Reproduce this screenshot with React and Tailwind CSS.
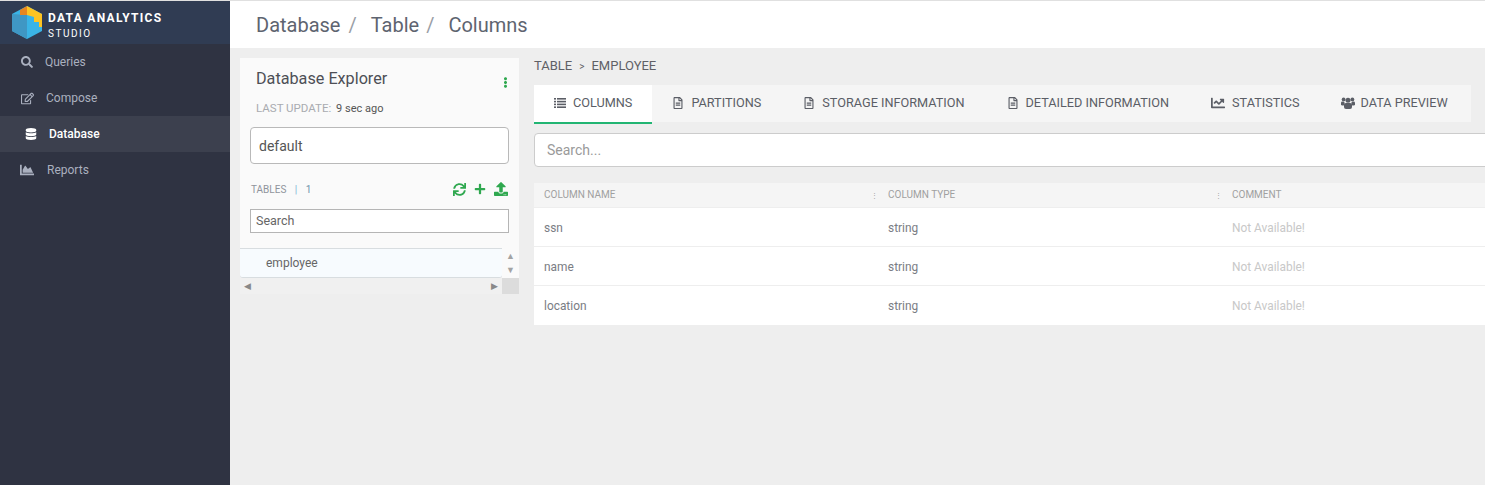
import { FaSearch, FaRegEdit, FaDatabase, FaChartArea, FaRegFileAlt, FaChartLine, FaSync, FaPlus, FaUpload, FaEllipsisV } from 'react-icons/fa'

function ListIcon() {
  return (
    <svg width="12" height="10" viewBox="0 0 12 10" fill="currentColor">
      <rect x="0" y="0" width="2" height="1.6" />
      <rect x="3" y="0" width="9" height="1.6" />
      <rect x="0" y="2.8" width="2" height="1.6" />
      <rect x="3" y="2.8" width="9" height="1.6" />
      <rect x="0" y="5.6" width="2" height="1.6" />
      <rect x="3" y="5.6" width="9" height="1.6" />
      <rect x="0" y="8.4" width="2" height="1.6" />
      <rect x="3" y="8.4" width="9" height="1.6" />
    </svg>
  )
}

function UsersIcon() {
  return (
    <svg width="14" height="12" viewBox="0 0 14 12" fill="currentColor" className="-mx-px">
      <circle cx="2.6" cy="2.4" r="1.9" />
      <circle cx="11.4" cy="2.4" r="1.9" />
      <circle cx="7" cy="3.2" r="2.5" />
      <rect x="0" y="4.6" width="3.6" height="4" rx="1.4" />
      <rect x="10.4" y="4.6" width="3.6" height="4" rx="1.4" />
      <rect x="3" y="6" width="8" height="6" rx="2" />
    </svg>
  )
}

const navItems = [
  { label: 'Queries', icon: FaSearch, size: 12, left: 'pl-5', gap: 'gap-[11px]' },
  { label: 'Compose', icon: FaRegEdit, size: 13, left: 'pl-5', gap: 'gap-3' },
  { label: 'Database', icon: FaDatabase, size: 12, left: 'pl-6', gap: 'gap-[11px]', active: true },
  { label: 'Reports', icon: FaChartArea, size: 14, left: 'pl-5', gap: 'gap-[13px]' },
]

const tabs = [
  { label: 'COLUMNS', icon: ListIcon, active: true },
  { label: 'PARTITIONS', icon: FaRegFileAlt, size: 12 },
  { label: 'STORAGE INFORMATION', icon: FaRegFileAlt, size: 12 },
  { label: 'DETAILED INFORMATION', icon: FaRegFileAlt, size: 12 },
  { label: 'STATISTICS', icon: FaChartLine, size: 14 },
  { label: 'DATA PREVIEW', icon: UsersIcon },
]

const rows = ['ssn', 'name', 'location']

function Logo() {
  return (
    <svg width="30" height="33" viewBox="0 0 30 33" className="shrink-0">
      <polygon points="15,0 30,8 30,25 15,33 0,25 0,8" fill="#3ab4e6" />
      <polygon points="15,9 15,33 0,25 0,8" fill="#3f97c4" />
      <polygon points="8,4 15,0 15,9 8,9" fill="#e8861f" />
      <polygon points="15,0 30,8 30,21 27,21 27,16 22,16 22,11 15,9" fill="#fdc422" />
    </svg>
  )
}

function Sidebar() {
  return (
    <aside className="w-[230px] shrink-0 bg-[#2f3342] flex flex-col">
      <div className="h-[43px] bg-[#303c53] flex items-center pl-3 gap-1.5">
        <Logo />
        <div className="text-white font-bold leading-[15px] tracking-[1.3px] mt-[6px]">
          <div className="text-[12px]">DATA ANALYTICS</div>
          <div className="text-[10px] font-normal tracking-[1.5px]">STUDIO</div>
        </div>
      </div>
      <nav>
        {navItems.map(({ label, icon: Icon, size, left, gap, active }) => (
          <div
            key={label}
            className={`h-9 flex items-center text-[12px] ${left} ${gap} ${active ? 'bg-[#3c404e] text-white font-medium' : 'text-[#aab0bf]'}`}
          >
            <span className="w-3.5 flex justify-center">
              <Icon size={size} />
            </span>
            {label}
          </div>
        ))}
      </nav>
    </aside>
  )
}

function Explorer() {
  return (
    <section className="w-[279px] shrink-0 self-start bg-[#fafafa]">
      <div className="px-2.5">
        <div className="flex justify-between pl-1.5 pt-[10px]">
          <h2 className="text-[16.2px] leading-[22px] text-[#4d4f56]">Database Explorer</h2>
          <FaEllipsisV size={11} className="text-[#2fa84f] mt-[9px] -mr-[2px]" />
        </div>
        <p className="pl-1.5 mt-[10px] text-[11.5px] leading-4 text-[#a9abb0]">
          LAST UPDATE: <span className="ml-0.5 text-[11px] text-[#555]">9 sec ago</span>
        </p>
        <div className="mt-[10px] h-[37px] pt-px border border-[#b9b9b9] rounded-[4px] bg-white flex items-center px-2 text-[14px] text-[#555]">
          default
        </div>
        <div className="mt-[17px] h-4 flex items-center justify-between">
          <span className="text-[10px] text-[#8f949c] pl-px">
            TABLES <span className="mx-1.5 text-[#7fb3d5]">|</span> <span className="text-[#6f93ad]">1</span>
          </span>
          <span className="flex items-center gap-2 text-[#2fa84f] -translate-x-px">
            <FaSync size={13} />
            <FaPlus size={12} />
            <FaUpload size={14} />
          </span>
        </div>
        <div className="mt-3 h-6 border border-[#b5b5b5] bg-white flex items-center px-[5px] text-[12.5px] text-[#666]">
          Search
        </div>
      </div>
      <div className="mt-[15px] flex bg-[#f0f0f0]">
        <div className="flex-1 h-[30px] bg-[#f7fbfe] border-y border-[#d8dde0] rounded-b-[3px] pl-[26px] flex items-center text-[12px] text-[#666]">
          employee
        </div>
        <div className="w-[17px] flex flex-col items-center justify-center gap-[5px] bg-[#fafafa] text-[#a3a3a3] text-[9px] leading-none">
          <span>▲</span>
          <span>▼</span>
        </div>
      </div>
      <div className="h-4 flex bg-[#f0f0f0]">
        <div className="flex-1 flex items-center justify-between px-[4px] text-[#888] text-[9px] leading-none">
          <span>◀</span>
          <span>▶</span>
        </div>
        <div className="w-[17px] bg-[#dcdcdc]" />
      </div>
    </section>
  )
}

function Tabs() {
  return (
    <div className="w-[937px] h-[37px] flex bg-[#f5f5f5] text-[12.7px] text-[#5b5e66]">
      {tabs.map(({ label, icon: Icon, size, active }) => (
        <div
          key={label}
          className={`h-[39px] px-5 shrink-0 whitespace-nowrap flex items-center gap-[7px] pb-[2px] border-b-2 ${active ? 'bg-white border-[#22b573] -mr-0.5' : 'border-transparent ml-0.5'}`}
        >
          <Icon size={size} />
          {label}
        </div>
      ))}
    </div>
  )
}

function ColumnsTable() {
  return (
    <div className="mt-4 w-[1000px] bg-white text-[11.9px] text-[#7a7d84]">
      <div className="h-[25px] pb-px grid grid-cols-[344px_344px_1fr] bg-[#f5f5f5] border-b border-[#eee] text-[10px] text-[#a0a0a0]">
        <div className="relative pl-2.5 flex items-center">
          COLUMN NAME
          <span className="absolute right-0 top-[10px] text-[7px] leading-none">⋮</span>
        </div>
        <div className="relative pl-2.5 flex items-center">
          COLUMN TYPE
          <span className="absolute right-0 top-[10px] text-[7px] leading-none">⋮</span>
        </div>
        <div className="pl-2.5 flex items-center">COMMENT</div>
      </div>
      {rows.map((name) => (
        <div key={name} className="h-[39px] pt-[3px] grid grid-cols-[344px_344px_1fr] items-center border-b border-[#eee] last:border-b-0">
          <div className="pl-2.5">{name}</div>
          <div className="pl-2.5">string</div>
          <div className="pl-2.5 text-[#c8c8c8]">Not Available!</div>
        </div>
      ))}
    </div>
  )
}

export default function App() {
  return (
    <div className="h-[485px] w-[1485px] overflow-hidden flex bg-[#eeeeee] border-t border-[#e0e0e0] font-['Roboto',sans-serif]">
      <Sidebar />
      <div className="flex-1 min-w-0 flex flex-col">
        <header className="h-[47px] shrink-0 bg-white flex items-center pl-[26px] text-[20px] text-[#5e6470]">
          Database <span className="ml-[8px] mr-[14px] text-[#9a9ea6]">/</span>
          Table <span className="ml-[7px] mr-[14px] text-[#9a9ea6]">/</span>
          Columns
        </header>
        <div className="flex pl-2.5 pt-2.5 gap-[15px]">
          <Explorer />
          <main className="flex-1 min-w-0">
            <div className="h-4 flex items-center text-[13px] text-[#5f6066]">
              TABLE <span className="mx-[7px] text-[10px]">&gt;</span> EMPLOYEE
            </div>
            <div className="mt-[11px]">
              <Tabs />
            </div>
            <div className="mt-[11px] w-[1000px] h-[34px] bg-white border border-[#cccccc] rounded-[4px] flex items-center pl-3 text-[14px] text-[#9a9a9a]">
              Search...
            </div>
            <ColumnsTable />
          </main>
        </div>
      </div>
    </div>
  )
}
